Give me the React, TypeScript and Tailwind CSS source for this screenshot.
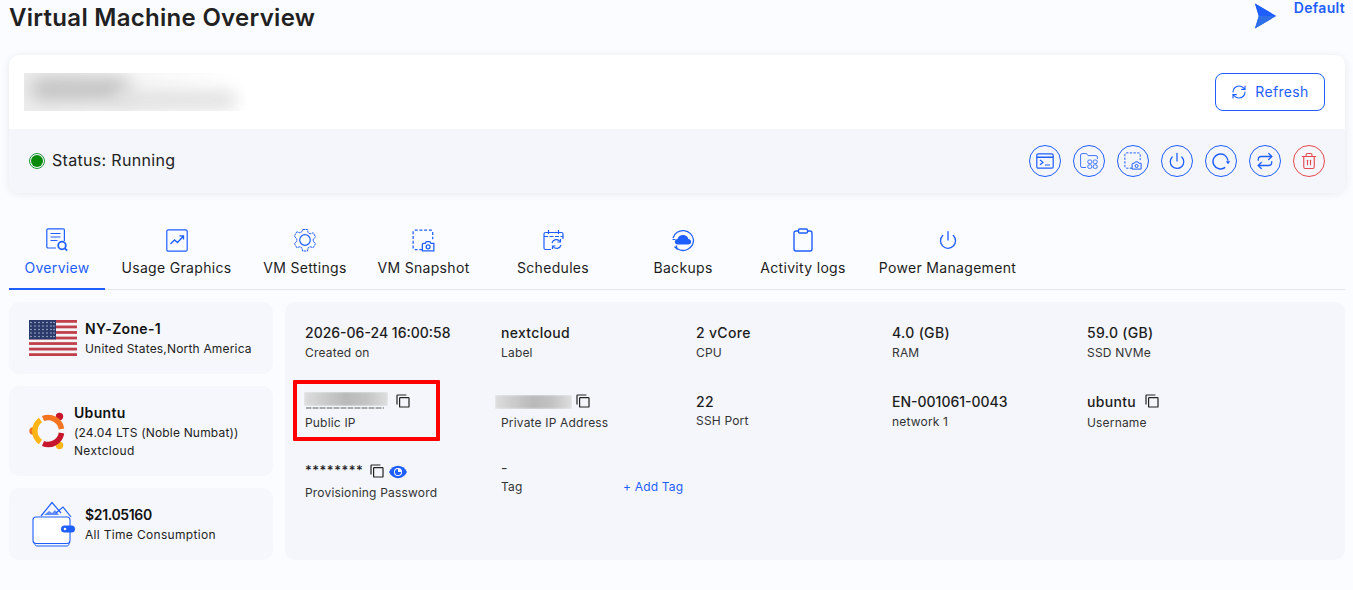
import { Power, RefreshCw, Repeat, Trash2 } from "lucide-react";
import type { ReactNode } from "react";

const blue = "#1f5eff";

const CopyIcon = () => (
  <svg width="14" height="14" viewBox="0 0 14 14" fill="none" stroke="#222" strokeWidth="1.2" className="shrink-0">
    <rect x="3.6" y="3.6" width="9.4" height="9.4" rx="0.6" />
    <path d="M1 10.4V1.6c0-.3.3-.6.6-.6h8.8" />
  </svg>
);

const EyeIcon = () => (
  <svg width="18" height="14" viewBox="0 0 18 14" className="shrink-0">
    <path d="M0 7C2 3 5.2 .8 9 .8S16 3 18 7c-2 4-5.200 6.200-9 6.200S2 11 0 7z" fill={blue} />
    <circle cx="9" cy="7" r="4" fill="#fff" />
    <path d="M9 3.900a3.100 3.100 0 1 0 3.100 3.100H9.600A.6.6 0 0 1 9 6.400z" fill={blue} />
  </svg>
);

const TerminalIcon = () => (
  <svg width="18" height="16" viewBox="0 0 18 16" fill="none" stroke={blue} strokeWidth="1.2">
    <rect x="0.8" y="0.8" width="16.400" height="14.400" rx="1.500" />
    <path d="M.8 4.200h16.400" strokeWidth="1.600" />
    <path d="M4 7l3 2.400L4 11.800M9 12h5" />
  </svg>
);

const FolderAppsIcon = () => (
  <svg width="18" height="16" viewBox="0 0 18 16" fill="none" stroke={blue} strokeWidth="1" opacity="0.85">
    <path d="M6 14.500H2A1.500 1.500 0 0 1 .6 13V2A1.500 1.500 0 0 1 2 .6h4.500l1.500 2h8a1.500 1.500 0 0 1 1.400 1.500V6" />
    <rect x="7.800" y="7" width="4" height="3.600" rx="1.400" />
    <rect x="13.200" y="7" width="4" height="3.600" rx="1.400" />
    <rect x="7.800" y="11.800" width="4" height="3.600" rx="1.400" />
    <rect x="13.200" y="11.800" width="4" height="3.600" rx="1.400" />
  </svg>
);

const SnapshotIcon = ({ size = 18 }: { size?: number }) => (
  <svg width={size} height={size} viewBox="0 0 20 20" fill="none" stroke={blue} strokeWidth="1.100">
    <path d="M9 18H2.500A1.500 1.500 0 0 1 1 16.500V2.500A1.500 1.500 0 0 1 2.500 1h14A1.500 1.500 0 0 1 18 2.500V9" strokeDasharray="2.600 1.500" />
    <path d="M9 19v-5.500c0-.6.4-1 1-1h1.500l1-1.500h3l1 1.500H19v6.500z" />
    <circle cx="14" cy="15.500" r="1.700" />
  </svg>
);

const RebootIcon = () => (
  <svg width="18" height="18" viewBox="0 0 18 18" fill="none">
    <path d="M13.200 15.300A7.500 7.500 0 1 1 16 8.800" stroke={blue} strokeWidth="1.500" />
    <path d="M13.800 9.200h4.400L16 12.200z" fill={blue} />
  </svg>
);

const ActionButton = ({ children, red }: { children: ReactNode; red?: boolean }) => (
  <div
    className={`flex h-8 w-8 items-center justify-center rounded-full border ${
      red ? "border-[#e5484d]" : "border-[#1f5eff]"
    }`}
  >
    {children}
  </div>
);

const OverviewTabIcon = () => (
  <svg width="22" height="24" viewBox="0 0 22 24" fill="none" stroke={blue} strokeWidth="1.200">
    <path d="M10 20H2a1.200 1.200 0 0 1-1.200-1.200V2A1.200 1.200 0 0 1 2 .8h15.200A1.200 1.200 0 0 1 18.400 2v11" />
    <path d="M4.500 5.500h10M4.500 9h10M4.500 12.500h7" />
    <circle cx="16" cy="17.500" r="3.800" strokeWidth="1.800" />
    <path d="M18.800 20.300l2.400 2.400" strokeWidth="1.800" />
  </svg>
);

const GraphTabIcon = () => (
  <svg width="22" height="23" viewBox="0 0 22 23" fill="none" stroke={blue} strokeWidth="1.200">
    <rect x="0.800" y="0.800" width="20.400" height="21.400" rx="1.500" />
    <path d="M4.500 15l4-4 3 2.500 5.500-6M13.500 6.800h4v3.800" strokeWidth="1.300" />
  </svg>
);

const GearTabIcon = () => (
  <svg width="24" height="24" viewBox="0 0 24 24" fill="none" stroke={blue} strokeWidth="1">
    <path
      strokeDasharray="2.400 .6"
      d="M9.600 1.500h4.800l.7 3.200 2 1.100 3.100-1 2.400 4.200-2.400 2.100v2.300l2.400 2.200-2.400 4.100-3.100-1-2 1.200-.7 3.100H9.600l-.7-3.100-2-1.200-3.100 1-2.400-4.100 2.400-2.200v-2.300L1.400 8l2.400-4.200 3.100 1 2-1.100z"
    />
    <circle cx="12" cy="12" r="5.300" strokeWidth="1.200" />
  </svg>
);

const ScheduleTabIcon = () => (
  <svg width="21" height="22" viewBox="0 0 21 22" fill="none" stroke={blue} strokeWidth="1.200">
    <path d="M8 20.500H2.500A1.500 1.500 0 0 1 1 19V5a1.500 1.500 0 0 1 1.500-1.500h16A1.500 1.500 0 0 1 20 5v5" />
    <path d="M5.500 1v4.500M15.500 1v4.500M1 7.500h19" strokeDasharray="4 1.500" />
    <path d="M9 14a4.500 4.500 0 0 1 8-1.500M18 16a4.500 4.500 0 0 1-8 1.500" />
    <path d="M17.500 10v3h-3M9.500 20v-3h3" />
  </svg>
);

const BackupTabIcon = () => (
  <svg width="24" height="24" viewBox="0 0 24 24" fill="none" stroke={blue} strokeWidth="1.300">
    <path d="M2 10A10.500 10.500 0 0 1 22.500 12 10.500 10.500 0 0 1 6 20.500" />
    <path d="M3.500 18.500l2.300 2.300-.3-3.300" />
    <path d="M1.500 11.500h3" strokeWidth="1" />
    <path
      d="M7 16.500c-2.200 0-3.200-1.400-3.200-2.800 0-1.500 1.200-2.700 2.800-2.800C7.200 8.700 9.300 7 12 7s4.800 1.700 5.400 3.900c1.600.1 2.800 1.300 2.800 2.800 0 1.400-1 2.800-3.200 2.800z"
      fill={blue}
      stroke="none"
    />
  </svg>
);

const ClipboardTabIcon = () => (
  <svg width="20" height="24" viewBox="0 0 20 24" fill="none" stroke={blue} strokeWidth="1.400">
    <path d="M5.500 3H3A2 2 0 0 0 1 5v16a2 2 0 0 0 2 2h14a2 2 0 0 0 2-2V5a2 2 0 0 0-2-2h-2.500" />
    <rect x="5.500" y="1" width="9" height="4" rx="1.200" />
  </svg>
);

const tabs: { label: string; width: string; icon: ReactNode }[] = [
  { label: "Overview", width: "w-[96px]", icon: <OverviewTabIcon /> },
  { label: "Usage Graphics", width: "w-[143px]", icon: <GraphTabIcon /> },
  { label: "VM Settings", width: "w-[114px]", icon: <GearTabIcon /> },
  { label: "VM Snapshot", width: "w-[123px]", icon: <SnapshotIcon size={23} /> },
  { label: "Schedules", width: "w-[136px]", icon: <ScheduleTabIcon /> },
  { label: "Backups", width: "w-[124px]", icon: <BackupTabIcon /> },
  { label: "Activity logs", width: "w-[116px]", icon: <ClipboardTabIcon /> },
  { label: "Power Management", width: "w-[173px]", icon: <Power size={20} color={blue} strokeWidth={1.6} /> },
];

const UsFlag = () => (
  <svg width="48" height="36" viewBox="0 0 48 36" className="shrink-0">
    <rect width="48" height="36" fill="#f4f4f6" />
    {[0, 1, 2, 3, 4, 5, 6].map((i) => (
      <rect key={i} y={i * 5.540} width="48" height="2.770" fill="#bf3f4a" />
    ))}
    <rect width="27" height="19.400" fill="#2a3a6b" />
    {[2, 6, 10, 14, 18, 22, 25].map((x) =>
      [2.500, 6, 9.500, 13, 16.500].map((y) => <circle key={`${x}-${y}`} cx={x} cy={y} r="0.700" fill="#cfd4e4" />),
    )}
  </svg>
);

const UbuntuLogo = () => (
  <svg width="38" height="38" viewBox="0 0 38 38" className="shrink-0">
    <circle cx="4" cy="19" r="3.700" fill="#f47421" />
    <circle cx="30.500" cy="4.500" r="3.700" fill="#c7162b" />
    <circle cx="30.500" cy="33.500" r="3.700" fill="#fdb515" />
    <g fill="none" strokeWidth="5.500">
      <path d="M14 6.500A13.500 13.500 0 0 1 32.500 17" stroke="#f47421" />
      <path d="M32.500 21A13.500 13.500 0 0 1 14 31.500" stroke="#c7162b" />
      <path d="M11.500 30A13.500 13.500 0 0 1 11.500 8" stroke="#fdb515" />
    </g>
  </svg>
);

const WalletIcon = () => (
  <svg width="44" height="46" viewBox="0 0 44 46" fill="none" className="shrink-0">
    <path d="M9 15L20 1.500 29 12M24 12l7-6 8 10" stroke={blue} strokeWidth="1.200" />
    <path d="M12 14l5-4 3 2 3-3 4 5z" fill={blue} opacity="0.7" />
    <path d="M2 38l1 5.500c.2 1 1 1.500 2 1.500h30c1 0 2-1 2-2v-3" stroke={blue} strokeWidth="1" />
    <rect x="1" y="16" width="37" height="26.500" rx="3" fill="#fff" stroke={blue} strokeWidth="1.100" />
    <rect x="29" y="24.500" width="14" height="7" rx="3.500" fill={blue} />
    <circle cx="33" cy="28" r="1.300" fill="#fff" />
  </svg>
);

const Blur = ({ className }: { className: string }) => (
  <div className={`overflow-hidden ${className}`}>
    <div className="h-full w-full bg-[linear-gradient(90deg,#dddddd,#b9b9b9_50%,#c4c4c4_75%,#dedede)] blur-[1px]" />
  </div>
);

const Field = ({
  value,
  label,
  extra,
  labelClass = "mt-0",
}: {
  value: ReactNode;
  label: string;
  extra?: ReactNode;
  labelClass?: string;
}) => (
  <div className="flex flex-col">
    <div className="flex h-[22px] items-center gap-[7px] text-[14px] font-medium text-[#1c1c1c]">
      {value}
      {extra}
    </div>
    <div className={`${labelClass} text-[12px] leading-[20px] tracking-[0.015em] text-[#333]`}>{label}</div>
  </div>
);

export default function App() {
  return (
    <div
      className="min-h-[590px] bg-[#fbfcff] pl-[9px] pr-[8px] tracking-[0.02em]"
      style={{ fontFamily: "Inter, 'Noto Sans', sans-serif" }}
    >
      <div className="flex h-[55px] items-start justify-between">
        <h1 className="mt-[3px] text-[24px] leading-[30px] font-semibold tracking-[0.012em] text-[#212121]">
          Virtual Machine Overview
        </h1>
        <div className="flex items-start">
          <svg width="23" height="26" viewBox="0 0 24 26" className="mt-[3px]">
            <path d="M1 0l22 13L1 26l4-13z" fill="#2563eb" />
            <path d="M5 13L1 0l22 13z" fill="#1f5eff" />
            <path d="M5 13h18L1 26z" fill="#2f6fe8" />
          </svg>
          <span className="ml-[17px] text-[14px] leading-[16px] font-semibold text-[#1f5eff]">Default</span>
        </div>
      </div>

      <div className="overflow-hidden rounded-[10px] bg-white shadow-[0_1px_8px_rgba(0,0,0,0.08)]">
        <div className="flex h-[74px] items-center justify-between pl-[15px] pr-[20px]">
          <div className="h-[38px] w-[222px] overflow-hidden bg-[linear-gradient(90deg,#eeeeee,#ffffff_95%)]">
            <div className="ml-[6px] mt-[4px] h-[24px] w-[100px] rounded-full bg-[#c2c2c2] blur-[9px]" />
            <div className="ml-[88px] mt-[-10px] h-[18px] w-[125px] rounded-full bg-[#e0e0e0] blur-[8px]" />
          </div>
          <div className="flex h-[38px] w-[110px] items-center justify-center gap-2 rounded-[8px] border border-[#1f5eff] text-[14px] text-[#1f5eff]">
            <RefreshCw size={16} strokeWidth={1.700} />
            <span className="mb-[2px]">Refresh</span>
          </div>
        </div>
        <div className="flex h-[64px] items-center justify-between bg-[#f4f6fb] pl-[20px] pr-[20px]">
          <div className="flex items-center gap-[7px] text-[16px] text-[#222]">
            <span className="flex h-4 w-4 items-center justify-center rounded-full border border-[#1f9a3a]">
              <span className="h-3 w-3 rounded-full bg-[#0a8a0a]" />
            </span>
            <span className="mb-[2px]">Status: Running</span>
          </div>
          <div className="flex gap-3">
            <ActionButton>
              <TerminalIcon />
            </ActionButton>
            <ActionButton>
              <FolderAppsIcon />
            </ActionButton>
            <ActionButton>
              <SnapshotIcon />
            </ActionButton>
            <ActionButton>
              <Power size={18} color={blue} strokeWidth={1.700} />
            </ActionButton>
            <ActionButton>
              <RebootIcon />
            </ActionButton>
            <ActionButton>
              <Repeat size={18} color={blue} strokeWidth={1.700} />
            </ActionButton>
            <ActionButton red>
              <Trash2 size={18} color="#e5484d" strokeWidth={1.500} />
            </ActionButton>
          </div>
        </div>
      </div>

      <div className="mt-[32px] flex h-[65px] border-b border-[#e4e6ea]">
        {tabs.map((tab, i) => (
          <div
            key={tab.label}
            className={`flex h-[65px] flex-col items-center ${tab.width} ${
              i === 0 ? "border-b-2 border-[#1f5eff] text-[#1f5eff]" : "text-[#1c1c1c]"
            }`}
          >
            <div className="flex h-[30px] items-center">{tab.icon}</div>
            <div className="mt-[3px] text-[14px] leading-[20px] whitespace-nowrap">{tab.label}</div>
          </div>
        ))}
      </div>

      <div className="mt-[12px] flex gap-[12px]">
        <div className="flex w-[264px] flex-col gap-[12px]">
          <div className="flex h-[72px] items-center gap-[8px] rounded-[10px] bg-[#f6f7fc] pl-[20px]">
            <UsFlag />
            <div>
              <div className="text-[14px] leading-[20px] font-semibold text-[#111]">NY-Zone-1</div>
              <div className="text-[12px] leading-[19px] tracking-[0.015em] text-[#222]">United States,North America</div>
            </div>
          </div>
          <div className="flex h-[90px] items-center gap-[7px] rounded-[10px] bg-[#f6f7fc] pl-[20px]">
            <UbuntuLogo />
            <div>
              <div className="text-[14px] leading-[20px] font-semibold text-[#111]">Ubuntu</div>
              <div className="text-[12px] leading-[19px] tracking-[0.015em] text-[#222]">(24.04 LTS (Noble Numbat))</div>
              <div className="text-[12px] leading-[18px] text-[#222]">Nextcloud</div>
            </div>
          </div>
          <div className="flex h-[72px] items-center gap-[8px] rounded-[10px] bg-[#f6f7fc] pl-[23px]">
            <WalletIcon />
            <div>
              <div className="ml-[1px] text-[14px] leading-[20px] font-semibold tracking-[-0.025em] text-[#111]">
                $21.05160
              </div>
              <div className="ml-[1px] text-[12px] leading-[19px] text-[#222]">All Time Consumption</div>
            </div>
          </div>
        </div>

        <div className="relative h-[258px] flex-1 rounded-[10px] bg-[#f4f6fb] pl-[20px] pt-[19px]">
          <div className="grid grid-cols-[196px_195px_196px_195px_1fr] grid-rows-[69px_70px_60px]">
            <Field value={<span className="tracking-normal">2026-06-24 16:00:58</span>} label="Created on" />
            <Field value="nextcloud" label="Label" />
            <Field value="2 vCore" label="CPU" />
            <Field value="4.0 (GB)" label="RAM" />
            <Field value="59.0 (GB)" label="SSD NVMe" />

            <Field
              value={
                <div className="relative ml-[-1px] mr-[1px]">
                  <Blur className="h-[14px] w-[84px] -translate-y-[2px]" />
                  <div className="absolute bottom-[-1px] left-[2px] h-[2px] w-[78px] bg-[repeating-linear-gradient(90deg,#8a8a8a_0,#8a8a8a_5px,#c8c8c8_5px,#c8c8c8_7px)] opacity-70 blur-[0.5px]" />
                </div>
              }
              extra={<CopyIcon />}
              label="Public IP"
              labelClass="mt-[1px]"
            />
            <Field
              value={<Blur className="ml-[-6px] mr-[-3px] h-[14px] w-[77px] translate-y-[1px]" />}
              extra={<CopyIcon />}
              label="Private IP Address"
              labelClass="mt-[1px]"
            />
            <Field value="22" label="SSH Port" labelClass="mt-[-1px]" />
            <Field value={<span className="tracking-normal">EN-001061-0043</span>} label="network 1" />
            <Field
              value={<span className="mr-[2px]">ubuntu</span>}
              extra={<CopyIcon />}
              label="Username"
              labelClass="mt-[1px]"
            />

            <Field
              value={<span className="text-[13px] tracking-[0.04em]">********</span>}
              extra={
                <>
                  <CopyIcon />
                  <span className="ml-[-2px] mt-[2px]">
                    <EyeIcon />
                  </span>
                </>
              }
              label="Provisioning Password"
              labelClass="mt-[1px]"
            />
            <div className="col-span-2 mt-[-4px] flex flex-col">
              <div className="flex h-[22px] items-center text-[14px] text-[#333]">-</div>
              <div className="mt-[-1px] flex text-[12px] leading-[20px] tracking-[0.015em] text-[#333]">
                <span className="w-[122px]">Tag</span>
                <span className="text-[#1f5eff]">+ Add Tag</span>
              </div>
            </div>
          </div>
          <div className="pointer-events-none absolute left-[8px] top-[78px] h-[61px] w-[147px] rounded-[1px] border-[4px] border-[#ff0000]" />
        </div>
      </div>
    </div>
  );
}
